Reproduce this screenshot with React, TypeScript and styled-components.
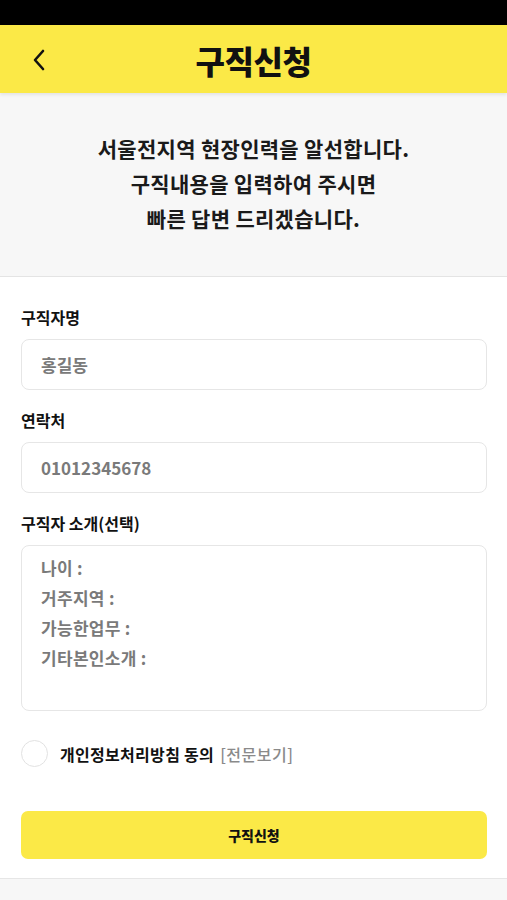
import React, {useState} from "react";
import styled, {createGlobalStyle} from "styled-components";

const GlobalStyle = createGlobalStyle`
    html, body {
        margin: 0;
        padding: 0;
        background: #ffffff;
    }

    body {
        font-family: "Noto Sans CJK KR", "Noto Sans", sans-serif;
        color: #111;
    }

    * {
        box-sizing: border-box;
    }
`;

const App: React.FC = () => {
    const [agreed, setAgreed] = useState(false);

    return (
        <Page>
            <GlobalStyle/>
            <StatusBar/>
            <Header>
                <BackButton aria-label="back">
                    <svg width="14" height="22" viewBox="0 0 14 22" fill="none">
                        <path d="M11 2L3 11L11 20" stroke="#111" strokeWidth="2.6" strokeLinecap="round"
                              strokeLinejoin="round"/>
                    </svg>
                </BackButton>
                <Title>구직신청</Title>
            </Header>
            <Intro>
                <IntroLine>서울전지역 현장인력을 알선합니다.</IntroLine>
                <IntroLine>구직내용을 입력하여 주시면</IntroLine>
                <IntroLine>빠른 답변 드리겠습니다.</IntroLine>
            </Intro>
            <Form>
                <Field>
                    <Label>구직자명</Label>
                    <Input placeholder="홍길동"/>
                </Field>
                <Field>
                    <Label>연락처</Label>
                    <Input placeholder="01012345678"/>
                </Field>
                <Field>
                    <Label>구직자 소개(선택)</Label>
                    <TextArea placeholder={"나이 :\n거주지역 :\n가능한업무 :\n기타본인소개 :"}/>
                </Field>
                <AgreeRow onClick={() => setAgreed(!agreed)}>
                    <Circle $checked={agreed}/>
                    <AgreeText>개인정보처리방침 동의</AgreeText>
                    <ViewAll>[전문보기]</ViewAll>
                </AgreeRow>
                <SubmitButton>구직신청</SubmitButton>
            </Form>
            <Footer/>
        </Page>
    );
};

export default App;

const Page = styled.div`
    width: 100%;
    min-height: 900px;
    display: flex;
    flex-direction: column;
    background: #fff;
`;

const StatusBar = styled.div`
    height: 25px;
    background: #000;
`;

const Header = styled.header`
    position: relative;
    height: 68px;
    background: #fbe947;
    display: flex;
    align-items: center;
    justify-content: center;
    box-shadow: 0 2px 3px rgba(0, 0, 0, 0.08);
    z-index: 1;
`;

const BackButton = styled.button`
    position: absolute;
    left: 32px;
    top: 24px;
    border: none;
    background: none;
    padding: 0;
    display: flex;
    cursor: pointer;
`;

const Title = styled.h1`
    margin: 0;
    font-size: 32px;
    font-weight: 900;
    letter-spacing: -0.5px;
    color: #111;
    line-height: 1;
    padding-top: 2px;
`;

const Intro = styled.section`
    height: 184px;
    background: #f7f7f7;
    border-bottom: 1px solid #e4e4e4;
    display: flex;
    flex-direction: column;
    align-items: center;
    justify-content: center;
    padding-bottom: 2px;
`;

const IntroLine = styled.p`
    margin: 0;
    font-size: 21px;
    font-weight: 700;
    line-height: 35px;
    color: #1a1a1a;
    letter-spacing: 0.3px;
`;

const Form = styled.div`
    padding: 30px 20px 19px 21px;
    display: flex;
    flex-direction: column;
`;

const Field = styled.div`
    display: flex;
    flex-direction: column;
    margin-bottom: 20px;
`;

const Label = styled.label`
    font-size: 16px;
    font-weight: 700;
    color: #111;
    line-height: 20px;
    margin-bottom: 12px;
`;

const Input = styled.input`
    height: 51px;
    width: 100%;
    border: 1px solid #e6e6e6;
    border-radius: 8px;
    padding: 0 19px;
    font-family: "Noto Sans CJK KR", "Noto Sans", sans-serif;
    font-size: 17px;
    font-weight: 700;
    outline: none;
    background: #fff;

    &::placeholder {
        color: #7a7a7a;
    }
`;

const TextArea = styled.textarea`
    height: 166px;
    width: 100%;
    border: 1px solid #e6e6e6;
    border-radius: 8px;
    padding: 7px 19px;
    font-family: "Noto Sans CJK KR", "Noto Sans", sans-serif;
    font-size: 17px;
    font-weight: 700;
    line-height: 30px;
    letter-spacing: 0.3px;
    resize: none;
    outline: none;

    &::placeholder {
        color: #7a7a7a;
    }
`;

const AgreeRow = styled.div`
    display: flex;
    align-items: center;
    margin-top: 9px;
    cursor: pointer;
`;

const Circle = styled.span<{ $checked: boolean }>`
    width: 27px;
    height: 27px;
    border-radius: 50%;
    border: 1px solid #e2e2e2;
    background: ${p => (p.$checked ? "#fbe947" : "#fff")};
    margin-right: 12px;
    flex-shrink: 0;
`;

const AgreeText = styled.span`
    font-size: 16px;
    font-weight: 700;
    color: #111;
    margin-right: 6px;
    letter-spacing: 0.3px;
`;

const ViewAll = styled.span`
    font-size: 16px;
    font-weight: 500;
    color: #8a8a8a;
    letter-spacing: 0.5px;
`;

const SubmitButton = styled.button`
    margin-top: 44px;
    height: 48px;
    width: 100%;
    border: none;
    border-radius: 7px;
    background: #fbe947;
    font-family: "Noto Sans CJK KR", "Noto Sans", sans-serif;
    font-size: 14px;
    font-weight: 900;
    color: #111;
    cursor: pointer;
`;

const Footer = styled.div`
    flex: 1;
    background: #f7f7f7;
    border-top: 1px solid #e6e6e6;
`;
